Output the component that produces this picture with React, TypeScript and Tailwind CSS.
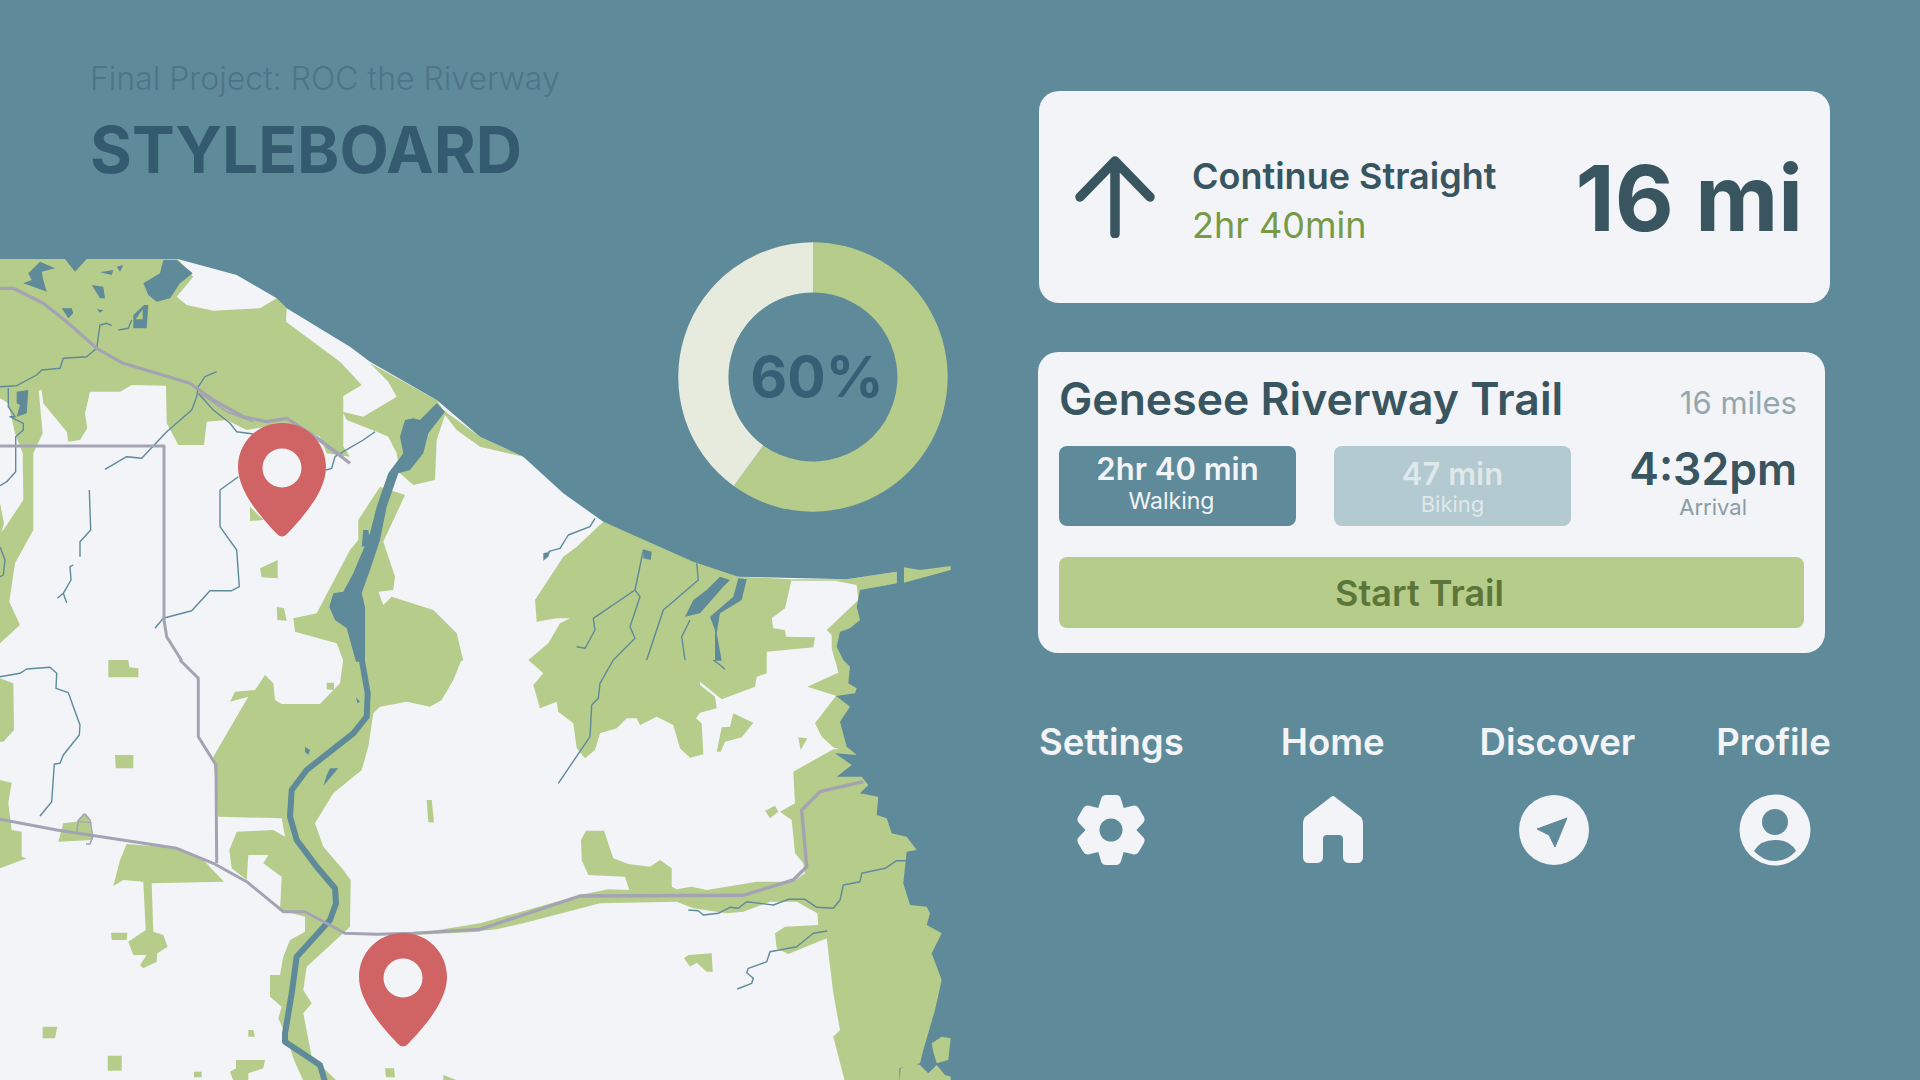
import React from "react";

const WATER = "#5f8a9a";
const LAND = "#f2f4f8";
const GREEN = "#b6cc8a";
const ROAD = "#a3a3b3";
const PIN = "#d06364";

const t = (ox: number, oy: number, s: string) =>
  s
    .trim()
    .split(/\s+/)
    .map((p) => {
      const [x, y] = p.split(",").map(Number);
      return `${(ox + x / 3).toFixed(1)},${(oy + y / 3).toFixed(1)}`;
    })
    .join(" ");

const A = (s: string) => t(0, 240, s);
const B = (s: string) => t(480, 240, s);
const C = (s: string) => t(0, 660, s);
const D = (s: string) => t(480, 660, s);

const greens = [
  A("0,57 533,57 580,110 530,170 560,195 640,212 780,205 830,175 860,205 858,245 1020,365 1085,435 1030,468 1030,620 1050,650 980,640 960,590 850,550 740,570 680,540 620,545 612,615 535,615 500,550 498,437 395,435 360,455 270,455 255,520 262,565 240,600 205,605 200,575 130,490 125,450 116,452 128,580 100,640 100,870 45,970 28,1085 60,1155 0,1210 0,880 12,868 70,780 68,640 45,580 25,490 0,475"),
  A("0,790 12,850 0,890"),
  A("1110,370 1310,480 1330,510 1440,590 1570,650 1440,620 1370,570 1335,525 1310,600 1305,720 1240,735 1200,700 1190,640 1165,590 1130,575 1040,540 1028,515 1090,530 1190,470 1165,425"),
  A("1140,740 1215,765 1150,905 1185,1010 1180,1050 1135,1055 1150,1095 1175,1070 1300,1110 1370,1180 1390,1262 1030,1262 1010,1210 885,1175 880,1135 950,1120 1050,930 1075,900 1075,840"),
  A("780,985 833,960 833,1015 785,1012"),
  A("830,1100 852,1105 860,1142 832,1140"),
  A("750,800 790,840 750,843"),
  C("1030,-2 1385,-2 1360,60 1325,120 1290,140 1220,125 1140,140 1120,160 1105,260 1085,330 1000,400 945,490 970,560 1030,630 1052,660 1050,800 1040,810 920,920 910,990 935,1030 910,1060 935,1190 1010,1262 910,1262 880,1195 860,1130 835,1075 845,1040 810,1010 810,945 840,945 850,890 870,840 915,815 915,770 840,750 845,650 790,610 805,585 745,585 740,660 695,625 688,570 710,515 820,510 855,530 845,475 655,470 640,290 745,110 690,125 705,95 765,90 795,45 820,70 825,120 845,132 960,132 1020,70"),
  C("0,55 40,70 42,210 10,245 0,245"),
  C("0,360 35,368 25,430 35,510 65,515 65,590 80,595 0,625"),
  C("325,0 385,0 388,22 415,25 415,52 325,52"),
  C("345,285 400,285 400,325 347,325"),
  C("175,545 190,490 230,485 250,460 265,470 278,540"),
  C("380,552 360,600 340,678 370,660 430,665 437,810 385,845 400,885 440,885 420,915 430,925 470,905 472,880 503,860 490,825 460,815 455,670 672,665 610,600 540,565"),
  C("333,818 382,818 380,840 335,840"),
  C("128,1100 172,1100 165,1135 128,1135"),
  C("323,1187 365,1187 365,1232 323,1232"),
  C("745,1110 760,1110 765,1130 745,1130"),
  C("582,1235 605,1235 605,1252 582,1252"),
  C("708,1200 795,1200 790,1225 745,1240 745,1262 700,1262 690,1235 708,1225"),
  C("1155,1225 1182,1225 1185,1252 1158,1252"),
  C("1330,1245 1375,1262 1330,1262"),
  C("1280,420 1295,420 1302,487 1285,487"),
  C("980,68 1002,68 1002,90 980,88"),
  C("1240,822 1440,790 1440,815 1240,825"),
  B("370,845 775,1010 935,1018 915,1105 875,1135 880,1165 915,1170 918,1190 1005,1192 1000,1222 860,1235 860,1300 830,1310 825,1340 725,1378 660,1325 660,1335 705,1370 710,1405 660,1418 648,1435 665,1450 670,1543 630,1553 600,1525 580,1455 530,1430 480,1455 470,1435 440,1435 410,1465 360,1480 345,1530 315,1555 290,1525 280,1450 235,1415 230,1385 180,1405 160,1335 190,1300 145,1260 205,1210 240,1150 270,1135 230,1135 170,1145 165,1080 250,950 290,920"),
  B("935,1018 1100,1018 1250,995 1250,1030 1145,1050 1135,1080 1130,1035 1065,1022 935,1022"),
  B("1150,1045 1135,1080 1040,1170 1055,1185 1055,1225 1065,1262 1300,1262 1300,1040"),
  D("1065,-2 1075,38 982,80 1068,107 1005,190 1025,230 1060,262 1130,285 1300,285 1300,-2"),
  D("1060,268 940,335 945,430 900,455 935,480 945,580 970,610 975,640 940,665 830,665 680,690 635,680 590,688 575,680 575,625 540,600 510,620 445,612 400,595 372,512 318,512 303,540 305,600 325,645 435,650 448,690 385,688 300,705 0,790 0,812 50,808 130,790 360,730 590,725 640,745 740,760 790,755 870,725 950,725 1012,760 1015,795 915,800 885,820 890,865 925,882 1040,835 1060,1000 1080,1110 1060,1130 1070,1170 1095,1265 1440,1265 1440,260"),
  D("855,452 885,437 895,455 870,475"),
  D("612,895 625,885 695,880 698,935 680,935 650,908 630,920"),
  D("955,232 982,235 962,270"),
  D("760,160 820,188 785,232 735,245 722,275 710,275 725,202 750,200"),
];

const water = [
  A("533,57 710,105 830,175 860,205 1050,320 1110,365 1310,480 1440,590"),
  B("130,650 250,760 370,845 640,965 775,1010 1100,1018 1250,995 1250,1030 1140,1050 1130,1100 1140,1140 1110,1165 1080,1175 1070,1220 1090,1260"),
  D("1110,20 1105,70 1130,85 1125,100 1068,108 1110,140 1080,185 1100,260 1130,285 1065,280 1115,315 1070,350 1145,350 1165,375 1140,400 1195,410 1190,465 1220,475 1235,520 1280,530 1310,570 1280,575 1270,670 1290,735 1340,740 1350,760 1340,795 1385,820 1355,880 1385,960 1365,1050 1330,1170 1320,1210 1258,1225 1258,1265"),
  "960,1085 960,250 178,250",
].join(" ");

const lakes = [
  A("490,60 530,60 578,100 540,130 510,175 470,185 445,165 430,130 480,100"),
  A("400,225 432,195 445,195 440,265 400,265"),
  A("85,100 120,65 165,85 125,95 130,120 140,155 100,140 70,130 95,120"),
  A("185,205 215,205 220,220 205,235"),
  A("275,135 310,140 315,175 300,175"),
  A("300,97 340,90 335,105"),
  A("350,80 370,75 360,95"),
  A("195,57 260,57 225,95"),
  A("290,208 310,210 300,218"),
  A("50,455 85,450 80,520 50,530 60,495 50,490"),
  A("1310,490 1335,515 1285,580 1270,640 1230,690 1195,700 1160,800 1140,900 1110,990 1085,1060 1095,1100 1095,1265 1068,1265 1040,1165 1005,1140 988,1100 1000,1060 1030,1055 1060,1000 1110,880 1130,800 1165,700 1210,640 1200,590 1215,540 1240,535 1260,540"),
  A("1090,870 1105,870 1112,915 1085,920"),
  C("915,260 930,270 925,285 915,275"),
  C("990,325 1015,325 970,378 980,345"),
  C("1068,112 1080,125 1072,130"),
  B("720,1010 750,1020 730,1040 660,1120 615,1130 640,1080 680,1050"),
  B("775,1015 800,1018 785,1080 720,1120 710,1180 725,1262 705,1262 705,1170 690,1130 760,1070"),
  B("490,928 515,935 512,960 490,955"),
  B("190,940 210,935 205,950 190,962"),
];

const rivers = [
  A("0,440 50,437 110,405 125,390 180,385 190,355 260,350 290,325 300,255 320,250 335,257"),
  A("25,445 25,500 45,530 30,530 70,550 70,570 47,590 47,695 20,725 0,737"),
  A("315,688 380,650 425,655 500,575 575,510 590,470 595,440 615,410 650,395"),
  A("595,460 640,510 690,550 710,575 760,582"),
  A("715,710 660,750 660,860 710,930 718,1040 695,1052 630,1052 575,1112 490,1135 465,1165"),
  A("268,750 272,870 240,905 240,950"),
  A("220,975 210,980 213,1020 190,1060 172,1075"),
  A("190,1060 200,1088"),
  A("0,920 15,960 10,1005 0,1010"),
  A("1125,575 1090,600 1030,635 1005,650 995,685 978,690"),
  A("355,270 385,265 395,240"),
  B("345,835 330,860 265,885 240,925 205,935"),
  B("490,930 465,1050 340,1135 345,1170 315,1225 290,1220"),
  B("465,1050 480,1070 450,1160 465,1195 400,1260"),
  B("650,970 655,1020 550,1110 500,1260"),
  B("630,1140 605,1190 615,1260"),
  D("400,0 360,70 355,115 335,135 330,230 235,370"),
  D("700,0 720,15 735,28"),
  D("625,750 655,752 670,765 715,760 750,742 775,745 800,725 880,735 925,718 975,718 1010,742 1060,745 1080,720 1090,675 1140,665 1145,640 1215,625 1250,602 1278,602"),
  D("1042,813 1000,820 950,860 870,875 860,905 805,925 800,938 820,955 815,970 772,987"),
  C("0,50 60,40 80,27 150,22 170,40 168,85 205,98 240,195 238,225 190,285 180,310 163,312 155,425 120,468"),
];

const roads: [string, number][] = [
  [A("0,145 40,145 130,190 200,245 290,325 370,370 470,400 570,430 640,480 730,530 800,545 860,535 930,580 1050,670"), 3.2],
  [A("600,460 680,515 760,545"), 1.5],
  [A("950,590 1030,650"), 2],
  [A("0,618 492,618 492,1140 500,1190 545,1262"), 3],
  [C("540,0 595,55 595,230 648,315 650,610"), 3],
  [C("0,478 170,510 530,565 640,610 740,665 850,755 915,755 1035,820 1130,823 1240,820 1440,808"), 3],
  [C("230,520 235,480 255,462 270,480 278,530 270,552 258,552"), 1.6],
  [C("235,485 275,488"), 1.2],
  [D("0,808 300,708 790,706 940,660 980,620 965,450 1020,395 1150,365"), 3.4],
];

const PIN_PATH =
  "M0,-45 C25,-45 44,-25 44,-1 C44,25 18,52 5,66 Q0,71 -5,66 C-18,52 -44,25 -44,-1 C-44,-25 -25,-45 0,-45Z";

function Pin({ x, y }: { x: number; y: number }) {
  return (
    <g transform={`translate(${x},${y})`}>
      <path d={PIN_PATH} fill={PIN} />
      <circle r="19.5" fill={LAND} />
    </g>
  );
}

function MapView() {
  return (
    <svg viewBox="0 259 952 821" className="block w-[952px] h-[821px]">
      <rect x="0" y="259" width="952" height="821" fill={LAND} />
      {greens.map((p, i) => (
        <polygon key={i} points={p} fill={GREEN} />
      ))}
      <polygon points={water} fill={WATER} />
      <polygon points={B("1272,982 1320,990 1412,978 1412,990 1272,1028")} fill={GREEN} />
      <polygon points={D("1355,1150 1385,1130 1412,1135 1405,1200 1370,1210 1360,1175")} fill={GREEN} />
      <polygon points={D("1258,1265 1262,1225 1300,1210 1320,1215 1345,1240 1370,1215 1395,1245 1412,1250 1412,1265")} fill={GREEN} />
      {lakes.map((p, i) => (
        <polygon key={i} points={p} fill={WATER} />
      ))}
      <polygon points={A("407,238 428,208 428,238")} fill={GREEN} />
      {rivers.map((p, i) => (
        <polyline key={i} points={p} fill="none" stroke={WATER} strokeWidth="1.4" strokeLinejoin="round" />
      ))}
      <polyline
        points={C("1085,-2 1103,100 1100,170 1060,220 920,330 875,390 870,470 890,540 950,620 1005,685 1008,730 990,780 890,890 875,1000 855,1120 855,1145 960,1215 975,1265")}
        fill="none"
        stroke={WATER}
        strokeWidth="6"
        strokeLinejoin="round"
      />
      {roads.map(([p, w], i) => (
        <polyline key={i} points={p} fill="none" stroke={ROAD} strokeWidth={w} strokeLinejoin="round" />
      ))}
      <Pin x={282} y={468} />
      <Pin x={403} y={978} />
    </svg>
  );
}

function Donut() {
  return (
    <div className="absolute left-[678px] top-[242px] w-[270px] h-[270px] flex items-center justify-center">
      <svg viewBox="-135 -135 270 270" className="absolute inset-0 w-[270px] h-[270px]">
        <path d="M0,-134.7 A134.7,134.7 0 1 1 -79.2,109 L-49.7,68.4 A84.5,84.5 0 1 0 0,-84.5 Z" fill={GREEN} />
        <path d="M0,-134.7 A134.7,134.7 0 0 0 -79.2,109 L-49.7,68.4 A84.5,84.5 0 0 1 0,-84.5 Z" fill="#e6ebdd" />
      </svg>
      <span className="relative pl-[8px] pb-[2px] text-[57px] leading-none font-bold text-[#365f75]">60%</span>
    </div>
  );
}

function Gear() {
  const tooth = "M-13,-21 L-10,-31 Q-9,-35 -5,-35 L5,-35 Q9,-35 10,-31 L13,-21 Z";
  return (
    <svg viewBox="-36 -36 72 72" className="w-[72px] h-[72px]">
      {[0, 60, 120, 180, 240, 300].map((a) => (
        <path key={a} d={tooth} transform={`rotate(${a})`} fill={LAND} />
      ))}
      <circle r="25" fill={LAND} />
      <circle r="11.5" fill={WATER} />
    </svg>
  );
}

function HomeIcon() {
  return (
    <svg viewBox="0 -1 60 70" className="w-[60px] h-[70px]">
      <path
        d="M28,1 Q30,-1 32,1 L58,21 Q60,24 60,27 L60,61 Q60,67 54,67 L47,67 Q40,67 40,61 L40,43 Q40,39 36,39 L24,39 Q20,39 20,43 L20,61 Q20,67 13,67 L6,67 Q0,67 0,61 L0,27 Q0,24 2,21 Z"
        fill={LAND}
      />
    </svg>
  );
}

function Discover() {
  return (
    <svg viewBox="-36 -36 72 72" className="w-[72px] h-[72px]">
      <circle r="35" fill={LAND} />
      <path d="M13,-12 L-17,-1 L-5,5 L1,17 Z" fill={WATER} stroke={WATER} strokeWidth="1" strokeLinejoin="round" />
    </svg>
  );
}

function ProfileIcon() {
  return (
    <svg viewBox="-36 -36 72 72" className="w-[72px] h-[72px]">
      <circle r="35.5" fill={LAND} />
      <circle cy="-8" r="13" fill={WATER} />
      <path d="M-21,21 Q-15,10 0,10 Q15,10 21,21 Q12,31 0,31 Q-12,31 -21,21Z" fill={WATER} />
    </svg>
  );
}

function NavItem({ label, className, iconClass, children }: { label: string; className?: string; iconClass?: string; children: React.ReactNode }) {
  return (
    <div className={`flex flex-col items-center ${className ?? ""}`}>
      <span className="text-[36.5px] leading-[44px] font-semibold text-[#f2f4f8]">{label}</span>
      <div className={`mt-[30px] h-[72px] flex items-center justify-center ${iconClass ?? ""}`}>{children}</div>
    </div>
  );
}

export default function App() {
  return (
    <div className="relative flex w-[1920px] h-[1080px] overflow-hidden bg-[#5f8a9a] font-[Inter,sans-serif]">
      <div className="w-[1038px] shrink-0 flex flex-col">
        <header className="h-[259px] pl-[90px] pt-[58px]">
          <p className="text-[32px] leading-[42px] font-light text-[#4d7587]">Final Project: ROC the Riverway</p>
          <h1 className="mt-[14px] text-[64px] leading-[72px] font-bold text-[#335a6e]">STYLEBOARD</h1>
        </header>
        <MapView />
      </div>
      <Donut />
      <div className="w-[793px] pt-[91px] flex flex-col">
        <section className="ml-[1px] w-[791px] h-[212px] rounded-[20px] bg-[#f2f4f8] flex items-center pl-[36px] pr-[27px]">
          <svg viewBox="0 0 80 82" className="w-[80px] h-[82px] shrink-0">
            <path d="M40,78 L40,6 M5,41 L40,5 L75,41" fill="none" stroke="#385560" strokeWidth="9.5" strokeLinecap="round" strokeLinejoin="round" />
          </svg>
          <div className="ml-[37px] pt-[6px]">
            <p className="text-[36px] leading-[44px] font-semibold text-[#385560]">Continue Straight</p>
            <p className="mt-[5px] text-[36px] leading-[44px] text-[#789945]">2hr 40min</p>
          </div>
          <p className="ml-auto pt-[2px] text-[91px] leading-none font-bold text-[#385560]">16 mi</p>
        </section>
        <section className="mt-[49px] w-[787px] h-[301px] rounded-[20px] bg-[#f2f4f8] pl-[21px] pr-[21px] pt-[23px]">
          <div className="flex items-center justify-between h-[48px] pr-[7px]">
            <h2 className="text-[44.5px] leading-[48px] font-semibold text-[#385560]">Genesee Riverway Trail</h2>
            <span className="pt-[8px] text-[31px] leading-[40px] text-[#95a7ae]">16 miles</span>
          </div>
          <div className="mt-[23px] flex items-start">
            <div className="w-[237px] h-[80px] rounded-[8px] bg-[#5f8a9a] flex flex-col items-center pt-[5px] text-[#f2f4f8]">
              <span className="text-[31px] leading-[36px] font-semibold">2hr 40 min</span>
              <span className="pr-[12px] text-[23px] leading-[28px]">Walking</span>
            </div>
            <div className="ml-[38px] w-[237px] h-[80px] rounded-[8px] bg-[#b3cad0] flex flex-col items-center pt-[10px] text-[#dfe8ea]">
              <span className="text-[31px] leading-[36px] font-semibold">47 min</span>
              <span className="text-[22px] leading-[24px]">Biking</span>
            </div>
            <div className="ml-auto -mt-[1px] pr-[7px] flex flex-col items-center">
              <span className="text-[44.5px] leading-[48px] font-semibold text-[#385560]">4:32pm</span>
              <span className="text-[22px] leading-[28px] text-[#8a9ca4]">Arrival</span>
            </div>
          </div>
          <button className="mt-[31px] block w-[745px] h-[71px] rounded-[8px] bg-[#b6cc8a] pr-[24px] text-[36px] font-semibold text-[#5c7639]">
            Start Trail
          </button>
        </section>
        <nav className="mt-[67px] ml-[1px] flex">
          <NavItem label="Settings"><Gear /></NavItem>
          <NavItem label="Home" className="ml-[97px]"><HomeIcon /></NavItem>
          <NavItem label="Discover" className="ml-[95px]" iconClass="pr-[6px]"><Discover /></NavItem>
          <NavItem label="Profile" className="ml-[81px]" iconClass="pl-[4px]"><ProfileIcon /></NavItem>
        </nav>
      </div>
    </div>
  );
}
